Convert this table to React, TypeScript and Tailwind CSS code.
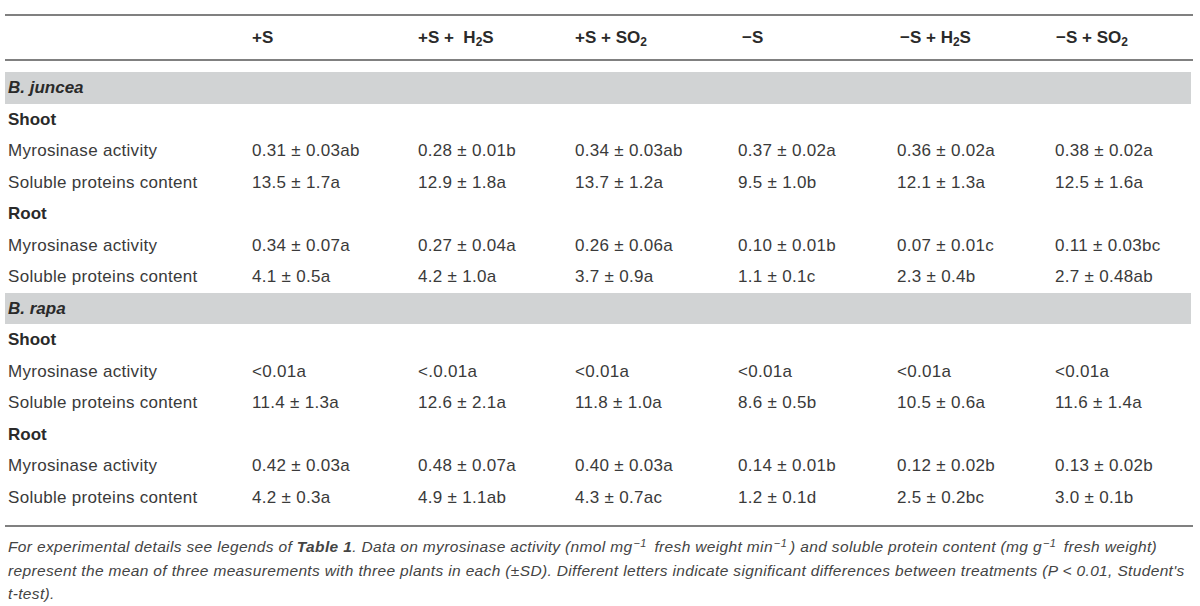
import React from 'react';

type Row = { label: string; values: string[] };
type Section = { species: string; groups: { organ: string; rows: Row[] }[] };

const pm = ' ± ';

const sections: Section[] = [
  {
    species: 'B. juncea',
    groups: [
      {
        organ: 'Shoot',
        rows: [
          { label: 'Myrosinase activity', values: [`0.31${pm}0.03ab`, `0.28${pm}0.01b`, `0.34${pm}0.03ab`, `0.37${pm}0.02a`, `0.36${pm}0.02a`, `0.38${pm}0.02a`] },
          { label: 'Soluble proteins content', values: [`13.5${pm}1.7a`, `12.9${pm}1.8a`, `13.7${pm}1.2a`, `9.5${pm}1.0b`, `12.1${pm}1.3a`, `12.5${pm}1.6a`] },
        ],
      },
      {
        organ: 'Root',
        rows: [
          { label: 'Myrosinase activity', values: [`0.34${pm}0.07a`, `0.27${pm}0.04a`, `0.26${pm}0.06a`, `0.10${pm}0.01b`, `0.07${pm}0.01c`, `0.11${pm}0.03bc`] },
          { label: 'Soluble proteins content', values: [`4.1${pm}0.5a`, `4.2${pm}1.0a`, `3.7${pm}0.9a`, `1.1${pm}0.1c`, `2.3${pm}0.4b`, `2.7${pm}0.48ab`] },
        ],
      },
    ],
  },
  {
    species: 'B. rapa',
    groups: [
      {
        organ: 'Shoot',
        rows: [
          { label: 'Myrosinase activity', values: ['<0.01a', '<.0.01a', '<0.01a', '<0.01a', '<0.01a', '<0.01a'] },
          { label: 'Soluble proteins content', values: [`11.4${pm}1.3a`, `12.6${pm}2.1a`, `11.8${pm}1.0a`, `8.6${pm}0.5b`, `10.5${pm}0.6a`, `11.6${pm}1.4a`] },
        ],
      },
      {
        organ: 'Root',
        rows: [
          { label: 'Myrosinase activity', values: [`0.42${pm}0.03a`, `0.48${pm}0.07a`, `0.40${pm}0.03a`, `0.14${pm}0.01b`, `0.12${pm}0.02b`, `0.13${pm}0.02b`] },
          { label: 'Soluble proteins content', values: [`4.2${pm}0.3a`, `4.9${pm}1.1ab`, `4.3${pm}0.7ac`, `1.2${pm}0.1d`, `2.5${pm}0.2bc`, `3.0${pm}0.1b`] },
        ],
      },
    ],
  },
];

const cols = 'grid grid-cols-[247px_166px_157px_163px_159px_158px_1fr]';

const Sup = ({ children }: { children: React.ReactNode }) => (
  <sup className="text-[11px] pl-[1px] pr-[3px]">{children}</sup>
);

const App: React.FC = () => {
  return (
    <div className="w-[1200px] h-[606px] bg-white text-[#3a3a3a] pt-[14px] pl-[5px] pr-[7px]" style={{ fontFamily: '"Liberation Sans", Arial, sans-serif' }}>
      {/* header */}
      <div className={`${cols} h-[47px] items-center border-y-2 border-[#808080] font-bold text-[17px] text-[#2a2a2a]`}>
        <div />
        <div>+S</div>
        <div>+S + &nbsp;H<sub className="text-[12px]">2</sub>S</div>
        <div>+S + SO<sub className="text-[12px]">2</sub></div>
        <div className="pl-[4px]">−S</div>
        <div className="pl-[3px]">−S + H<sub className="text-[12px]">2</sub>S</div>
        <div className="pl-[1px]">−S + SO<sub className="text-[12px]">2</sub></div>
      </div>

      <div className="pt-[11px]">
        {sections.map(sec => (
          <div key={sec.species}>
            <div className="h-[31.5px] bg-[#d1d3d4] flex items-center pl-[3px] mr-[2px] font-bold italic text-[17px] text-[#2a2a2a]">
              {sec.species}
            </div>
            {sec.groups.map(g => (
              <div key={g.organ}>
                <div className="h-[31.5px] flex items-center pl-[3px] font-bold text-[17px] text-[#2a2a2a]">{g.organ}</div>
                {g.rows.map(r => (
                  <div key={r.label} className={`${cols} h-[31.5px] items-center text-[17px] tracking-[0.3px]`}>
                    <div className="pl-[3px]">{r.label}</div>
                    {r.values.map((v, i) => (
                      <div key={i} className="whitespace-pre">{v}</div>
                    ))}
                  </div>
                ))}
              </div>
            ))}
          </div>
        ))}
      </div>

      {/* footnote, broken where the printed table breaks it */}
      <div className="mt-[12px] border-t-2 border-[#808080] pt-[8px] pl-[3px] italic text-[15.5px] tracking-[0.35px] leading-[23.5px] text-[#444] whitespace-nowrap">
        <div>
          For experimental details see legends of <b>Table 1</b>. Data on myrosinase activity (nmol mg<Sup>−1</Sup> fresh weight min<Sup>−1</Sup>) and soluble protein content (mg g<Sup>−1</Sup> fresh weight)
        </div>
        <div>
          represent the mean of three measurements with three plants in each (±SD). Different letters indicate significant differences between treatments (P &lt; 0.01, Student's
        </div>
        <div>t-test).</div>
      </div>
    </div>
  );
};

export default App;
